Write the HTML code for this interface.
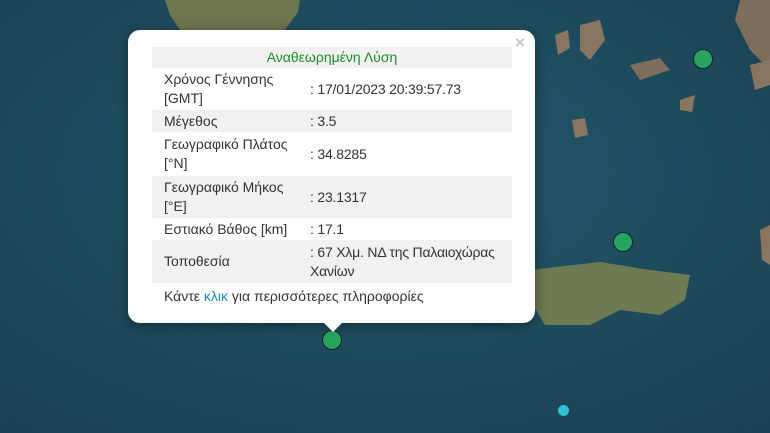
<!DOCTYPE html>
<html><head><meta charset="utf-8"><style>
*{margin:0;padding:0;box-sizing:border-box}
body{width:770px;height:433px;overflow:hidden;position:relative;background:#1e4b5c;font-family:"Liberation Sans",Arial,sans-serif}
.pop{position:absolute;left:128px;top:30px;width:407px;height:293px;background:#fff;border-radius:12px;box-shadow:0 3px 14px rgba(0,0,0,.4)}
.tip{position:absolute;left:321px;top:320px;width:0;height:0;border-left:12px solid transparent;border-right:12px solid transparent;border-top:12px solid #fff}
.x{position:absolute;left:515px;top:33px;color:#c3c3c3;font-size:17px;font-weight:bold}
table{position:absolute;left:152px;top:47px;width:360px;border-collapse:collapse;font-size:14px;color:#333}
td{padding:0 12px;vertical-align:middle;line-height:19px}
td.v{padding:0 2px 0 0;white-space:nowrap;letter-spacing:-0.2px}
tr.g{background:#f1f1f1}
.h{text-align:center;color:#1e8a2a;height:21px}
.f{position:absolute;left:164px;top:288px;font-size:14px;color:#333}
.f span{color:#1a8ab5}
.m{position:absolute;border-radius:50%;background:#27a560;border:1.5px solid #123}
</style></head><body>
<svg width="770" height="433" style="position:absolute;left:0;top:0">
<defs><radialGradient id="r" cx="0.5" cy="0.4" r="0.8"><stop offset="0" stop-color="#25596b"/><stop offset="1" stop-color="#183f4f"/></radialGradient></defs>
<rect width="770" height="433" fill="url(#r)"/>
<path d="M165 0 L300 0 L298 12 L285 30 L180 30 L170 15Z" fill="#6d7550"/>
<path d="M530 270 L600 262 L650 270 L690 275 L685 300 L660 315 L620 310 L590 325 L545 325 L530 300Z" fill="#6e7a52"/>
<path d="M580 25 L600 20 L605 40 L590 60 L580 50Z" fill="#8a7560"/>
<path d="M555 35 L568 30 L570 48 L558 55Z" fill="#8a7560"/>
<path d="M630 65 L660 58 L670 70 L640 80Z" fill="#7e6e5c"/>
<path d="M740 0 L770 0 L770 70 L750 50 L735 20Z" fill="#7e6e5c"/>
<path d="M750 65 L770 60 L770 85 L755 90Z" fill="#8a7560"/>
<path d="M680 100 L695 95 L692 112 L680 110Z" fill="#8a7560"/>
<path d="M572 120 L585 118 L588 135 L575 138Z" fill="#8a7560"/>
<path d="M760 230 L770 225 L770 265 L762 260Z" fill="#8a7560"/>
</svg>
<div class="m" style="left:693px;top:49px;width:20px;height:20px"></div>
<div class="m" style="left:613px;top:232px;width:20px;height:20px"></div>
<div class="m" style="left:322px;top:330px;width:20px;height:20px"></div>
<div class="m" style="left:558px;top:405px;width:11px;height:11px;background:#2fc1d6;border:none"></div>
<div class="pop"></div><div class="tip"></div>
<div class="x">×</div>
<table>
<tr class="g"><td colspan="2" class="h">Αναθεωρημένη Λύση</td></tr>
<tr style="height:42px"><td style="width:158px">Χρόνος Γέννησης [GMT]</td><td class="v">: 17/01/2023 20:39:57.73</td></tr>
<tr class="g" style="height:22px"><td>Μέγεθος</td><td class="v">: 3.5</td></tr>
<tr style="height:44px"><td>Γεωγραφικό Πλάτος [°N]</td><td class="v">: 34.8285</td></tr>
<tr class="g" style="height:42px"><td>Γεωγραφικό Μήκος [°E]</td><td class="v">: 23.1317</td></tr>
<tr style="height:22px"><td>Εστιακό Βάθος [km]</td><td class="v">: 17.1</td></tr>
<tr class="g" style="height:43px"><td>Τοποθεσία</td><td class="v">: 67 Χλμ. ΝΔ της Παλαιοχώρας<br>Χανίων</td></tr>
</table>
<div class="f">Κάντε <span>κλικ</span> για περισσότερες πληροφορίες</div>
</body></html>
